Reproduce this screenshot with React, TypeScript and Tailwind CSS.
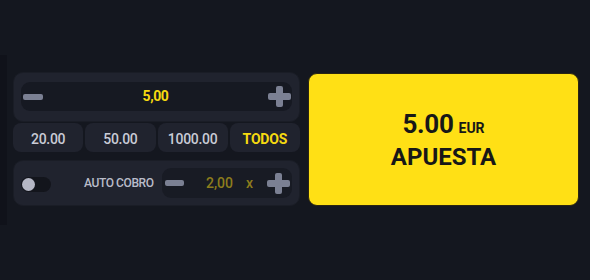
import React from "react";

const Minus = ({ w = 20 }: { w?: number }) => (
  <div className="h-[6px] rounded-[2px] bg-[#7b8093]" style={{ width: w }} />
);

const Plus = () => (
  <svg width="23" height="21" viewBox="0 0 23 21">
    <rect x="8" y="0" width="7" height="21" rx="2" fill="#7b8093" />
    <rect x="0" y="7" width="23" height="7" rx="2" fill="#7b8093" />
  </svg>
);

export default function App() {
  const font = { fontFamily: "Roboto, 'Noto Sans', sans-serif" };
  return (
    <div
      className="w-[590px] h-[280px] bg-[#14171f] flex items-start overflow-hidden"
      style={font}
    >
      <div className="w-[7px] h-[170px] mt-[55px] bg-[#10121a]" />
      <div className="ml-[6px] mt-[72px] w-[287px] flex flex-col">
        <div className="h-[50px] rounded-[10px] bg-[#20232e] border border-[#1a1d26] px-[7px] pt-[9px]">
          <div className="h-[29px] rounded-[9px] bg-[#161922] flex items-center justify-between pl-[2px] pr-[1px]">
            <Minus />
            <span className="text-[14px] font-bold text-[#f6da10] tracking-[-0.4px]">5,00</span>
            <Plus />
          </div>
        </div>
        <div className="grid grid-cols-4 gap-[2px] mt-[1px] h-[29px]">
          {["20.00", "50.00", "1000.00"].map((t) => (
            <div
              key={t}
              className="rounded-[8px] bg-[#20232e] flex items-center justify-center pt-[3px] text-[14px] font-medium text-[#c9cbd6] tracking-[-0.3px]"
            >
              {t}
            </div>
          ))}
          <div className="rounded-[8px] bg-[#20232e] flex items-center justify-center pt-[3px] text-[14px] font-bold text-[#f6da10] tracking-[-0.2px]">
            TODOS
          </div>
        </div>
        <div className="h-[46px] mt-[8px] rounded-[10px] bg-[#20232e] border border-[#1a1d26] flex items-center pl-[7px] pr-[7px]">
          <div className="w-[30px] h-[15px] rounded-full bg-[#13151c] flex items-center pl-[1px] mt-[2px]">
            <div className="w-[13px] h-[13px] rounded-full bg-[#b5b7c5]" />
          </div>
          <span className="ml-[33px] text-[12px] font-medium text-[#b9bcc9] tracking-[-0.4px]">
            AUTO COBRO
          </span>
          <div className="ml-auto w-[130px] h-[30px] rounded-[9px] bg-[#181b24] flex items-center pl-[3px] pr-[2px]">
            <Minus w={19} />
            <span className="ml-[22px] text-[14px] font-medium text-[#8d7d1c]">2,00</span>
            <span className="ml-[13px] text-[14px] font-medium text-[#8d7d1c]">x</span>
            <div className="ml-auto">
              <Plus />
            </div>
          </div>
        </div>
      </div>
      <div className="ml-[8px] mt-[73px] w-[271px] h-[133px] rounded-[9px] bg-[#ffe015] border border-[#2a2510] flex flex-col items-center justify-center text-[#171717]">
        <div className="flex items-baseline font-bold leading-none">
          <span className="text-[26px] tracking-[-0.3px]">5.00</span>
          <span className="text-[14px] ml-[5px]">EUR</span>
        </div>
        <div className="text-[24px] font-bold leading-none mt-[8px]">APUESTA</div>
      </div>
    </div>
  );
}
